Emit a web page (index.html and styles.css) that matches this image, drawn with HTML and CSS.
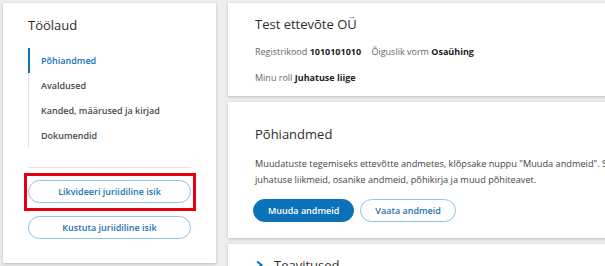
FILE: index.html
```html
<!DOCTYPE html>
<html lang="et">
<head>
    <meta charset="UTF-8">
    <title>Töölaud</title>
    <link rel="stylesheet" href="styles.css">
</head>
<body>
    <div class="page">
        <aside class="sidebar card">
            <h2 class="sidebar-title">Töölaud</h2>
            <ul class="nav">
                <li class="active">Põhiandmed</li>
                <li>Avaldused</li>
                <li>Kanded, määrused ja kirjad</li>
                <li>Dokumendid</li>
            </ul>
            <div class="sidebar-actions">
                <div class="highlight">
                    <button class="btn btn-outline btn-wide">Likvideeri juriidiline isik</button>
                </div>
                <button class="btn btn-outline btn-wide">Kustuta juriidiline isik</button>
            </div>
        </aside>

        <main class="content">
            <section class="card company">
                <h1 class="card-title">Test ettevõte OÜ</h1>
                <p class="meta">
                    <span class="label">Registrikood</span> <strong>1010101010</strong>
                    <span class="label spaced">Õiguslik vorm</span> <strong>Osaühing</strong>
                </p>
                <p class="meta"><span class="label">Minu roll</span> <strong>Juhatuse liige</strong></p>
            </section>

            <section class="card basics">
                <h2 class="card-title">Põhiandmed</h2>
                <p class="text">Muudatuste tegemiseks ettevõtte andmetes, klõpsake nuppu "Muuda andmeid". Saate muuta ettevõtte nime, aadressi,<br>juhatuse liikmeid, osanike andmeid, põhikirja ja muud põhiteavet.</p>
                <div class="actions">
                    <button class="btn btn-primary">Muuda andmeid</button>
                    <button class="btn btn-outline">Vaata andmeid</button>
                </div>
            </section>

            <section class="card notices">
                <h2 class="card-title collapse">
                    <svg class="chevron" width="9" height="10" viewBox="0 0 9 10"><path d="M2 1.5 L6.5 5 L2 8.5" fill="none" stroke="#0b72b9" stroke-width="2"/></svg>
                    Teavitused
                </h2>
            </section>
        </main>
    </div>
</body>
</html>
```

FILE: styles.css
```css
html {
    overflow: hidden;
}

body {
    margin: 0;
    background-color: #eeeeee;
    font-family: 'Open Sans', 'Noto Sans', sans-serif;
    color: #333;
}

.page {
    display: flex;
    align-items: flex-start;
    gap: 12px;
    padding: 3px 0 0 3px;
}

.card {
    background-color: #fff;
    box-shadow: 0 1px 3px rgba(0, 0, 0, 0.22);
}

/* Sidebar */
.sidebar {
    width: 213px;
    height: 260px;
    box-sizing: border-box;
    padding: 13px 25px 0 25px;
    flex-shrink: 0;
}

.sidebar-title {
    margin: 0 0 14px;
    font-size: 13px;
    font-weight: 400;
    line-height: 18px;
    color: #2e2e2e;
}

.nav {
    list-style: none;
    margin: 0;
    padding: 0;
    border-left: 1px solid #e2e2e2;
}

.nav li {
    font-size: 9px;
    font-weight: 600;
    line-height: 25px;
    padding-left: 11px;
    color: #4a4a4a;
    margin-left: -1px;
    border-left: 2px solid transparent;
}

.nav li.active {
    color: #0b72b9;
    border-left-color: #0b72b9;
}

.sidebar-actions {
    margin-top: 19px;
    border-top: 1px solid #e4e4e4;
    padding-top: 12px;
    display: flex;
    flex-direction: column;
    gap: 13px;
}

/* punane raam ümber nupu */
.highlight {
    position: relative;
}

.highlight::after {
    content: "";
    position: absolute;
    top: -7px;
    left: -4px;
    right: -5px;
    bottom: -8px;
    border: 3px solid #e3000f;
}

.btn {
    font-family: inherit;
    font-size: 9px;
    font-weight: 600;
    border-radius: 12px;
    cursor: pointer;
    padding: 0 14px;
    height: 23px;
    line-height: 19px;
}

.btn-wide {
    display: block;
    width: 100%;
}

.btn-outline {
    background-color: #fff;
    color: #1a73b5;
    border: 1px solid #8cc4ea;
}

.btn-primary {
    background-color: #0b72b9;
    color: #fff;
    border: 1px solid #0b72b9;
}

/* Content */
.content {
    width: 640px;
    flex-shrink: 0;
    display: flex;
    flex-direction: column;
    gap: 6px;
}

.card-title {
    margin: 0;
    font-size: 13px;
    font-weight: 400;
    line-height: 18px;
    color: #2e2e2e;
}

.company {
    height: 93px;
    box-sizing: border-box;
    padding: 12px 27px 0;
}

.meta {
    margin: 12px 0 0;
    font-size: 9px;
    line-height: 14px;
    color: #222;
}

.meta + .meta {
    margin-top: 12px;
}

.label {
    color: #666;
}

.spaced {
    margin-left: 8px;
}

.basics {
    height: 136px;
    box-sizing: border-box;
    padding: 23px 27px 0;
}

.text {
    margin: 13px 0 0;
    font-size: 9.2px;
    line-height: 16px;
    color: #444;
}

.actions {
    display: flex;
    gap: 6px;
    margin-top: 11px;
    margin-left: -2px;
}

.notices {
    height: 40px;
    padding: 12px 27px 0;
}

.collapse {
    display: flex;
    align-items: center;
    gap: 10px;
}
```
